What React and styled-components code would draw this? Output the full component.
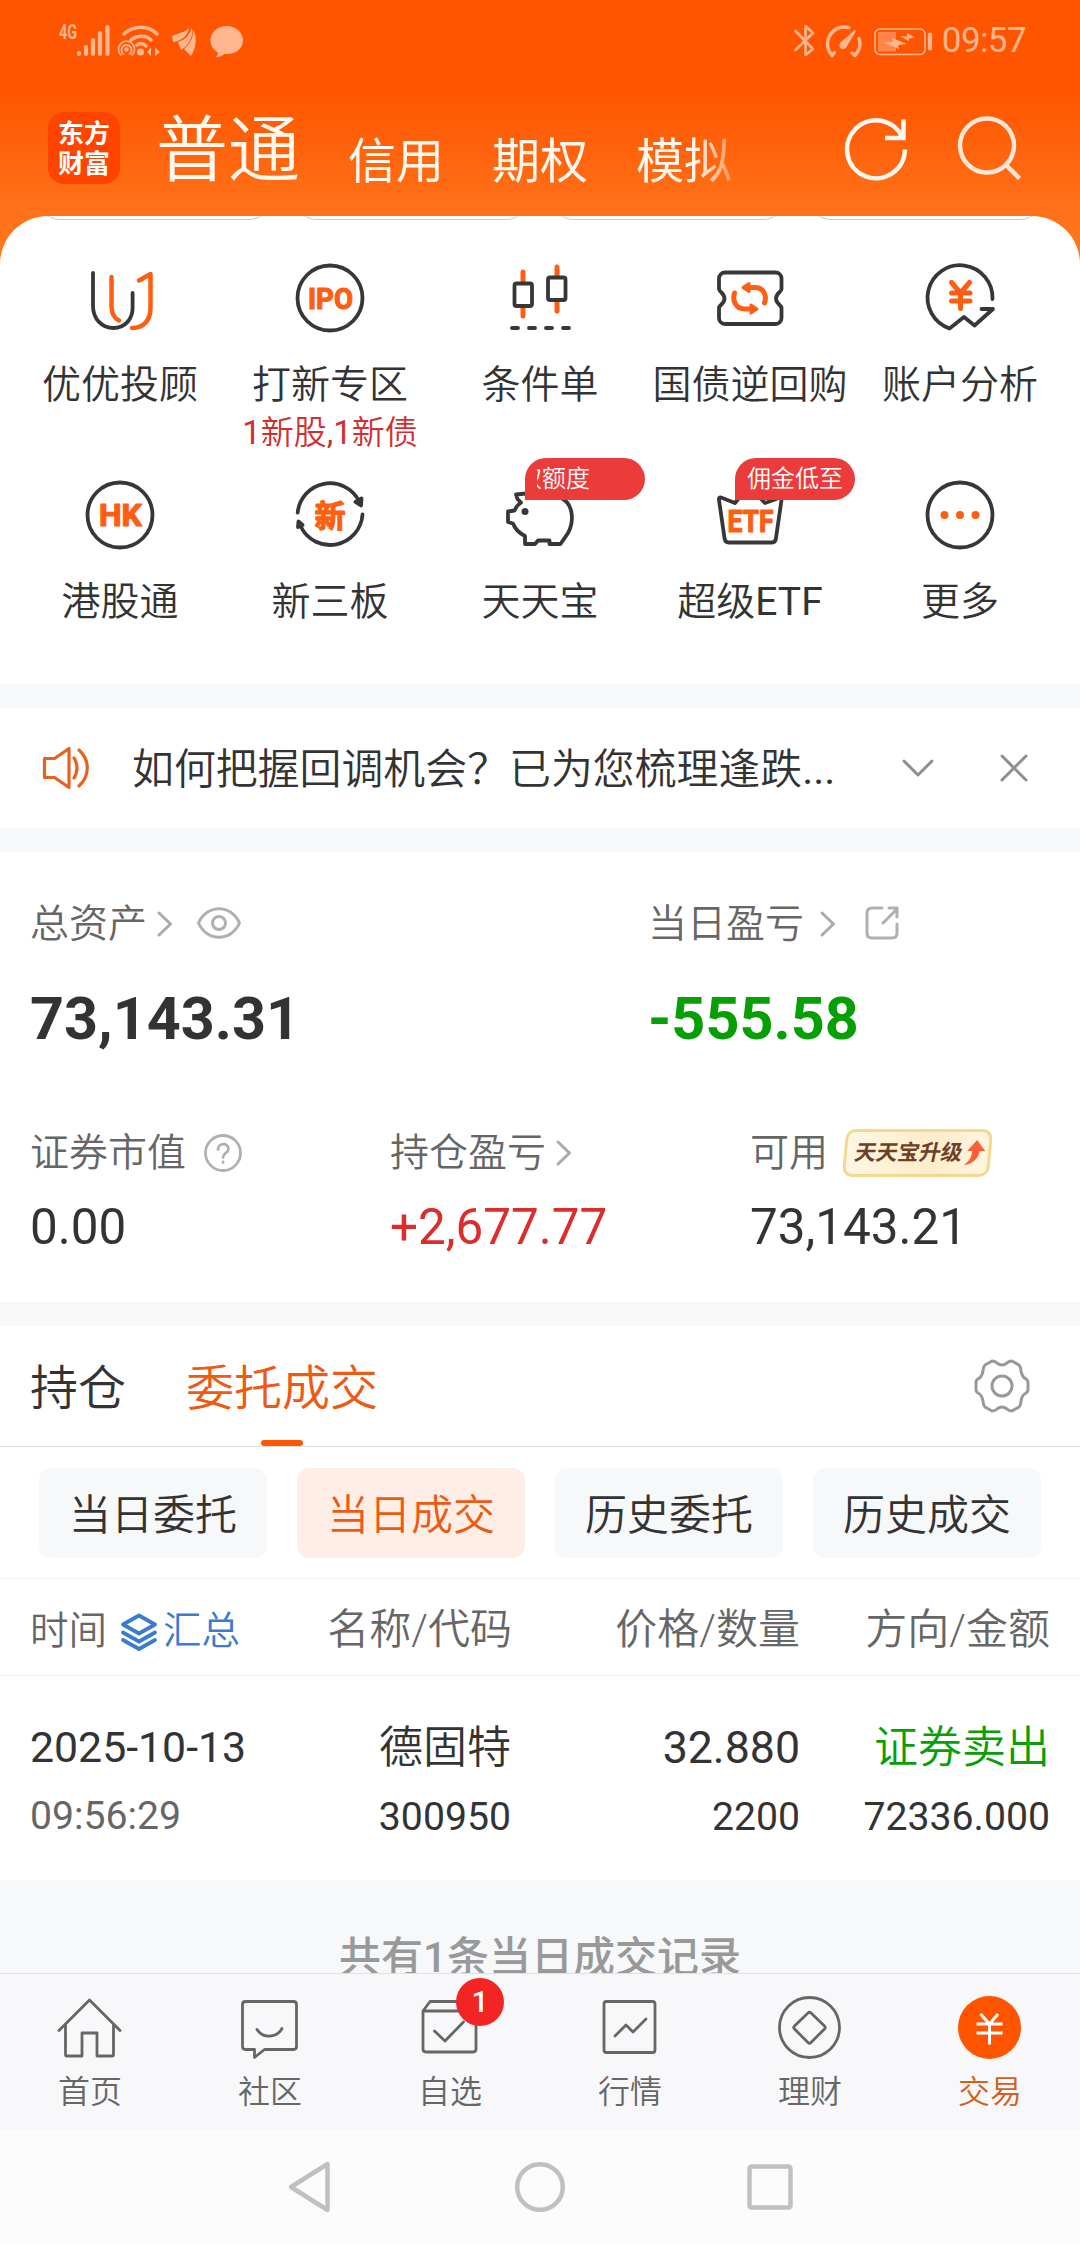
import React from "react";
import styled, { createGlobalStyle } from "styled-components";

const GlobalStyle = createGlobalStyle`
  * {
    box-sizing: border-box;
  }
  body {
    margin: 0;
    background: #fcfcfc;
    font-family: Roboto, "Noto Sans CJK SC", sans-serif;
    font-weight: 400;
    color: #333;
  }
  svg {
    display: block;
    flex: none;
    overflow: visible;
  }
`;

const Screen = styled.div`
  display: flex;
  flex-direction: column;
  width: 1080px;
  height: 2244px;
  overflow: hidden;
  background: #f7f8fa;
`;

const Top = styled.header`
  flex: none;
  height: 684px;
  background: linear-gradient(#ff5500 0, #ff5500 90px, #ff7018 205px, #ff7a20 270px);
`;

const StatusBar = styled.div`
  display: flex;
  align-items: center;
  justify-content: space-between;
  height: 82px;
  padding: 0 54px 0 58px;
  color: #ffb68f;
`;

const StatusGroup = styled.div`
  display: flex;
  align-items: center;
`;

const Clock = styled.span`
  margin-left: 8px;
  font-size: 35px;
  line-height: 40px;
  letter-spacing: -0.6px;
`;

const TitleBar = styled.div`
  display: flex;
  align-items: center;
  height: 134px;
  padding: 0 59px 0 48px;
  color: #fff8ee;
`;

const Logo = styled.div`
  display: flex;
  flex-direction: column;
  align-items: center;
  width: 72px;
  height: 72px;
  margin-top: -2px;
  padding-top: 5px;
  border-radius: 16px;
  background: #ff4400;
  color: #fff;
  font-family: "Noto Sans CJK SC", sans-serif;
  font-size: 26px;
  font-weight: 700;
  line-height: 30px;
`;

const TopTabs = styled.nav`
  display: flex;
  align-items: flex-start;
  width: 590px;
  height: 100px;
  margin-left: 36px;
  overflow: hidden;
  white-space: nowrap;
  mask-image: linear-gradient(90deg, #000 538px, rgba(0, 0, 0, 0.35) 575px);
`;

const TopTab = styled.span`
  margin-right: 48px;
  font-size: ${({ $big }) => ($big ? 72 : 48)}px;
  font-weight: ${({ $big }) => ($big ? 350 : 400)};
  line-height: ${({ $big }) => ($big ? 104 : 126)}px;
`;

const TopIcons = styled.div`
  display: flex;
  align-items: center;
  gap: 48px;
  margin-left: auto;
`;

const Panel = styled.section`
  height: 468px;
  border-radius: 48px 48px 0 0;
  background: #fff;
  overflow: hidden;
`;

const Pills = styled.div`
  display: flex;
  align-items: flex-end;
  gap: 20px;
  width: 1200px;
  height: 4px;
  padding-left: 36px;
`;

const Pill = styled.div`
  width: 237px;
  height: 60px;
  border: 1px solid #c8c8c8;
  border-radius: 24px;
`;

const Grid = styled.div`
  display: grid;
  grid-template-columns: repeat(5, 210px);
  grid-auto-rows: 217px;
  padding: 42px 15px 0;
`;

const Tool = styled.div`
  display: flex;
  flex-direction: column;
  align-items: center;
`;

const ToolIcon = styled.div`
  position: relative;
  width: 72px;
  height: 72px;
`;

const ToolName = styled.div`
  margin-top: 27px;
  font-size: 39px;
  font-weight: 350;
  line-height: 48px;
  white-space: nowrap;
`;

const ToolNote = styled.div`
  margin-top: 1px;
  color: #d03030;
  font-size: 33px;
  font-weight: 350;
  line-height: 46px;
  white-space: nowrap;
`;

const Latin = styled.span`
  font-weight: 400;
`;

const Badge = styled.div`
  position: absolute;
  left: 21px;
  top: -21px;
  width: 120px;
  height: 42px;
  padding: 0 12px;
  border-radius: 21px 21px 21px 0;
  background: #eb3b3b;
  color: #fff;
  font-size: 24px;
  font-weight: 350;
  line-height: 43px;
`;

const Marquee = styled.div`
  display: flex;
  overflow: hidden;
  white-space: nowrap;
`;

const MarqueeText = styled.span`
  margin-left: ${({ $shift }) => -$shift}px;
`;

const Notice = styled.section`
  display: flex;
  align-items: center;
  flex: none;
  height: 120px;
  margin: 24px 0;
  padding: 0 52px 0 42px;
  background: #fff;
`;

const NoticeText = styled.div`
  width: 720px;
  margin-left: 42px;
  padding-top: 3px;
  font-size: 41.9px;
  font-weight: 350;
  line-height: 60px;
  white-space: nowrap;
`;

const NoticeActions = styled.div`
  display: flex;
  align-items: center;
  gap: 66px;
  margin-left: auto;
`;

const Assets = styled.section`
  flex: none;
  height: 450px;
  padding: 47px 30px 0;
  background: #fff;
`;

const AssetRow = styled.div`
  display: grid;
  grid-template-columns: ${({ $columns }) => $columns};
  height: ${({ $height }) => $height}px;
`;

const AssetLabel = styled.div`
  display: flex;
  align-items: center;
  height: 50px;
  color: #666;
  font-size: 39px;
  font-weight: 350;
  line-height: 50px;
  svg {
    margin-left: ${({ $gap }) => $gap || 10}px;
  }
  svg + svg {
    margin: -2px 0 0 ${({ $iconGap }) => $iconGap || 24}px;
  }
`;

const BigValue = styled.div`
  margin-top: 34px;
  color: ${({ color }) => color || "#333"};
  font-size: 59.3px;
  font-weight: 700;
  line-height: 71px;
`;

const Value = styled.div`
  margin-top: 19px;
  color: ${({ color }) => color || "#333"};
  font-size: 49.4px;
  line-height: 60px;
`;

const Upgrade = styled.span`
  display: flex;
  align-items: center;
  width: 147px;
  height: 48px;
  margin-left: 16px;
  padding-left: 8px;
  border: 3px solid #f5d890;
  border-radius: 10px;
  background: linear-gradient(90deg, #fff6e4, #ffedcb 60%, #fff5e0);
  transform: skewX(-5deg);
  color: #6b4226;
  font-size: 21.5px;
  font-weight: 700;
  line-height: 40px;
  svg {
    margin-left: 2px;
  }
`;

const UpgradeText = styled.span`
  transform: skewX(-7deg);
`;

const Orders = styled.section`
  flex: none;
  height: 554px;
  margin-top: 24px;
  background: #fff;
`;

const Tabs = styled.div`
  display: flex;
  align-items: stretch;
  height: 121px;
  padding: 0 50px 0 30px;
  border-bottom: 1px solid #ddd;
  svg {
    margin: 33px 0 0 auto;
  }
`;

const Tab = styled.div`
  display: flex;
  flex-direction: column;
  align-items: center;
  justify-content: space-between;
  margin-right: 60px;
  color: ${({ $active }) => ($active ? "#ec5a14" : "#333")};
  font-size: 48px;
  font-weight: 350;
  line-height: 126px;
  &::after {
    content: "";
    width: 42px;
    height: 6px;
    margin-top: -12px;
    border-radius: 3px;
    background: ${({ $active }) => ($active ? "#ff5500" : "transparent")};
  }
`;

const Chips = styled.div`
  display: flex;
  gap: 30px;
  height: 132px;
  padding: 21px 39px;
  border-bottom: 1px solid #f4f4f5;
`;

const Chip = styled.div`
  width: 228px;
  height: 90px;
  border-radius: 12px;
  background: ${({ $active }) => ($active ? "#ffeee5" : "#f7f8fa")};
  color: ${({ $active }) => ($active ? "#ec5a14" : "#333")};
  font-size: 42px;
  font-weight: 350;
  line-height: 96px;
  text-align: center;
`;

const TableRow = styled.div`
  display: grid;
  grid-template-columns: 250px 231px 289px 250px;
  padding: 0 30px;
  text-align: right;
`;

const HeadRow = styled(TableRow)`
  grid-template-columns: 250px 232px 288px 250px;
  height: 97px;
  border-bottom: 1px solid #eee;
  color: #666;
  font-size: 42px;
  font-weight: 350;
  line-height: 102px;
`;

const TimeHead = styled.div`
  display: flex;
  align-items: center;
  font-size: 38.5px;
  line-height: 104px;
  svg {
    margin: 2px 5px 0 13px;
  }
`;

const Summary = styled.span`
  color: #3b7dcc;
`;

const Cell = styled.div`
  padding-top: 39px;
  color: ${({ color }) => color || "#333"};
  font-size: ${({ $light }) => ($light ? 44 : 44.7)}px;
  font-weight: ${({ $light }) => ($light ? 350 : 400)};
  line-height: 66px;
`;

const DateCell = styled(Cell)`
  padding-top: 38px;
  font-size: 42.8px;
  text-align: left;
`;

const SubText = styled.div`
  color: ${({ color }) => color || "#333"};
  font-size: 39.2px;
  font-weight: 400;
  line-height: 72px;
`;

const Footnote = styled.div`
  flex: none;
  height: 93px;
  overflow: hidden;
  padding-top: 48px;
  color: #999;
  font-size: 42px;
  font-weight: 500;
  line-height: 60px;
  text-align: center;
`;

const BottomBar = styled.nav`
  display: grid;
  grid-template-columns: repeat(6, 1fr);
  flex: none;
  height: 157px;
  border-top: 1px solid #e2e2e4;
  background: #f8f8fa;
`;

const BottomItem = styled.div`
  position: relative;
  display: flex;
  flex-direction: column;
  align-items: center;
  padding-top: 21px;
  color: ${({ $active }) => ($active ? "#d4601c" : "#666")};
  font-size: 32px;
  font-weight: 350;
  line-height: 42px;
`;

const BottomName = styled.span`
  margin-top: 12px;
`;

const Count = styled.span`
  position: absolute;
  top: 4px;
  left: 96px;
  width: 48px;
  height: 48px;
  border-radius: 50%;
  background: #f22424;
  color: #fff;
  font-size: 30px;
  font-weight: 500;
  line-height: 48px;
  text-align: center;
`;

const SystemNav = styled.div`
  display: flex;
  justify-content: center;
  align-items: center;
  gap: 182.5px;
  flex: none;
  height: 114px;
  background: #fcfcfc;
`;

const ORANGE = "#ff5e12";
const INK = "#373737";

const Line = ({ w = 72, h = 72, color = INK, sw = 3.8, children }) => (
  <svg
    width={w}
    height={h}
    viewBox={`0 0 ${w} ${h}`}
    fill="none"
    stroke={color}
    strokeWidth={sw}
    strokeLinecap="round"
    strokeLinejoin="round"
  >
    {children}
  </svg>
);

const IconText = ({ x, y, size, width, children }) => (
  <text
    x={x}
    y={y}
    fontSize={size}
    fontWeight="700"
    fill={ORANGE}
    stroke={ORANGE}
    strokeWidth="1.2"
    textLength={width}
    lengthAdjust="spacingAndGlyphs"
  >
    {children}
  </text>
);

// Latin letters and digits keep the regular weight next to the lighter Chinese text
const Mixed = ({ text }) =>
  text
    .split(/([\w,]+)/)
    .filter(Boolean)
    .map((part, i) => (/^[\w,]/.test(part) ? <Latin key={i}>{part}</Latin> : part));

const AdvisorIcon = () => (
  <Line>
    <path d="M9 11V44C9 57 18 66 29.500 66S48.600 57 48.600 46V31" />
    <path d="M27.500 15V44C27.500 52 30 56 35 58.500M48 66C60 66 66.500 58 66.500 46V12L55 18.500" stroke={ORANGE} strokeWidth="4.500" />
  </Line>
);

const IpoIcon = () => (
  <Line>
    <circle cx="36" cy="36" r="32.500" />
    <IconText x="14" y="47" size="30" width="45">IPO</IconText>
  </Line>
);

const CandleIcon = () => (
  <Line>
    <path d="M19 10V54M53 5V49" stroke={ORANGE} strokeWidth="5" />
    <rect x="10.500" y="21.500" width="17.500" height="22.500" rx="2" fill="#fff" />
    <rect x="44" y="15.500" width="17.500" height="22.500" rx="2" fill="#fff" />
    <path d="M8 66H14M25 66H31M42 66H48M59 66H65" />
  </Line>
);

const RepoIcon = () => (
  <Line>
    <path d="M11 10.500H61.500a6 6 0 0 1 6 6V27c0 3-5.500 4-5.500 9.500s5.500 6.500 5.500 9.500V56a6 6 0 0 1-6 6H11a6 6 0 0 1-6-6V46c0-3 5.500-4 5.500-9.500S5 30 5 27V16.500a6 6 0 0 1 6-6Z" />
    <g stroke={ORANGE} strokeWidth="5">
      <path d="M36 25.500H41C49 25.500 53.500 33 50.500 41M20.500 31C18 39 22 47 31 47H36" />
      <path d="M29 25.500L35 21.500V29.500ZM43 47L37 43V51Z" fill={ORANGE} strokeWidth="3" />
    </g>
  </Line>
);

const AccountIcon = () => (
  <Line>
    <path d="M68.500 37A32.500 32.500 0 1 0 25.500 66.500L40 55L50.500 63.500L69 47H57.500" />
    <path d="M27.500 20.500L36.500 31L45.500 20.500M36.500 31V46.500M27.500 31H46M27.500 39H46" stroke={ORANGE} strokeWidth="5" />
  </Line>
);

const HkIcon = () => (
  <Line>
    <circle cx="36" cy="36" r="32.500" />
    <IconText x="15" y="47" size="31" width="43">HK</IconText>
  </Line>
);

const NeeqIcon = () => (
  <Line>
    <path d="M3.700 33.500A32.500 32.500 0 0 1 65 22M68.500 35.500A32.500 32.500 0 0 1 7 48" />
    <path d="M61.500 23L67.500 19.500L67 26.500ZM4 48L8.500 46L4.500 42.500Z" fill={INK} />
    <IconText x="20.500" y="47.500" size="31">新</IconText>
  </Line>
);

const PigIcon = () => (
  <Line>
    <path d="M22 14.500L12 15.500L13.500 20L17 23.500C13.500 26 11.500 29 10.500 31.500L4 32.500V43L9 44.500C11 50 15 54 21 57V65H31L34 61.500H45.500V65H56.500L64 54C70 43 70 25 57 19C46 13 32 14 26 18Z" />
    <circle cx="21" cy="32.500" r="3.500" fill={INK} stroke="none" />
  </Line>
);

const EtfIcon = () => (
  <Line>
    <path d="M21 24L7 18.500Q4.500 18 5 21L10.500 59Q11 63.500 15 63.500H58Q61.500 63.500 62 59L67.500 21Q68 18 65 19L51 24L46 19M21 24L25 19" />
    <IconText x="13.500" y="53" size="31" width="46">ETF</IconText>
  </Line>
);

const MoreIcon = () => (
  <Line>
    <circle cx="36" cy="36" r="32.500" />
    <g fill={ORANGE} stroke="none">
      <circle cx="20.500" cy="36" r="4" />
      <circle cx="36" cy="36" r="4" />
      <circle cx="51.500" cy="36" r="4" />
    </g>
  </Line>
);

const Chevron = () => (
  <Line w={16} h={26} color="#aaa" sw={3}>
    <path d="M2 2L13.500 13L2 24" />
  </Line>
);

const tools = [
  { name: "优优投顾", Icon: AdvisorIcon },
  { name: "打新专区", Icon: IpoIcon, note: "1新股,1新债" },
  { name: "条件单", Icon: CandleIcon },
  { name: "国债逆回购", Icon: RepoIcon },
  { name: "账户分析", Icon: AccountIcon },
  { name: "港股通", Icon: HkIcon },
  { name: "新三板", Icon: NeeqIcon },
  { name: "天天宝", Icon: PigIcon, badge: "取额度", shift: 19 },
  { name: "超级ETF", Icon: EtfIcon, badge: "佣金低至", shift: 0 },
  { name: "更多", Icon: MoreIcon },
];

const HomeIcon = () => (
  <Line w={64} h={64} color="#666" sw={2.8}>
    <path d="M1 35.500L31.500 5L62 35.500M7.500 30V60Q7.500 61 8.500 61H24V38H39V61H54.500Q55.500 61 55.500 60V30" />
  </Line>
);

const CommunityIcon = () => (
  <Line w={64} h={64} color="#666" sw={2.8}>
    <path d="M7.500 6.500H55.500Q58.500 6.500 58.500 9.500V51.500Q58.500 54.500 55.500 54.500H26.500L16.500 62.500V54.500H7.500Q4.500 54.500 4.500 51.500V9.500Q4.500 6.500 7.500 6.500Z" />
    <path d="M19 34.500C24.500 43.500 38.500 43.500 44 33.500" />
  </Line>
);

const WatchIcon = () => (
  <Line w={64} h={64} color="#666" sw={2.8}>
    <path d="M5 16L12 6.500H52L58 16M5 16H58V54Q58 57 55 57H8Q5 57 5 54ZM16.500 36L27 46L45.500 27" />
  </Line>
);

const MarketIcon = () => (
  <Line w={64} h={64} color="#666" sw={2.8}>
    <rect x="6" y="6.500" width="51" height="51" rx="2.500" />
    <path d="M17 41L28 30L35 37L48 24" />
  </Line>
);

const WealthIcon = () => (
  <Line w={64} h={64} color="#666" sw={2.8}>
    <circle cx="31.500" cy="32.500" r="30" />
    <path d="M30 18Q31.500 16.500 33 18L46.500 31Q48 32.500 46.500 34L33 47.500Q31.500 49 30 47.500L16.500 34Q15 32.500 16.500 31Z" />
  </Line>
);

const TradeIcon = () => (
  <Line w={64} h={64} color="#fff" sw={3}>
    <circle cx="31.500" cy="32.500" r="31.500" fill="#ff5500" stroke="none" />
    <path d="M22.500 19L31.500 29L40 19M31.500 29V49.500M18.500 29H44.500M18.500 38H44.500" strokeLinecap="butt" />
  </Line>
);

const bottomItems = [
  { name: "首页", Icon: HomeIcon },
  { name: "社区", Icon: CommunityIcon },
  { name: "自选", Icon: WatchIcon, count: 1 },
  { name: "行情", Icon: MarketIcon },
  { name: "理财", Icon: WealthIcon },
  { name: "交易", Icon: TradeIcon, active: true },
];

const StatusLeft = () => (
  <svg width="186" height="36" viewBox="58 23 186 36" fill="none" stroke="currentColor" strokeLinecap="round">
    <text x="59" y="39" fontSize="20" fontWeight="700" fill="currentColor" stroke="none" textLength="18" lengthAdjust="spacingAndGlyphs">4G</text>
    <path d="M79 53V54M86 47V54M93 40V54M100 33V54M107.500 27V54" strokeWidth="4.200" />
    <path d="M124 34C134 25 148 25 157 34M131 40C137 35 146 35 151 40M137 45C139 43 143 43 146 46" strokeWidth="3.500" />
    <circle cx="140.500" cy="52" r="3.500" fill="currentColor" stroke="none" />
    <circle cx="126.500" cy="49.500" r="2.200" fill="currentColor" stroke="none" />
    <path d="M123.500 54A5 5 0 1 1 129.500 54M121 55A8 8 0 1 1 132 55" strokeWidth="1.800" />
    <path d="M147 52L151 47.500V56ZM160 52L155 47.500V56Z" fill="currentColor" stroke="none" />
    <g fill="currentColor" stroke="none">
      <path d="M172 36C178 33 184 33 189 28C188 36 181 41 173 42Z" />
      <path d="M178 42C185 40 190 35 191.500 28C194 37 188 46 181 50Z" />
      <path d="M184 49C191 44 194 36 192.500 29C198 36 196 49 191 56Z" />
      <path d="M226.500 26C217 26 210.500 32.500 210.500 40.500C210.500 46.500 213.500 50 218 52.500C218 54.500 217 56 215.500 57.500C219.500 57 222 56 224.500 54C235 55 243 49 243 40.500C243 32.500 236 26 226.500 26Z" />
    </g>
  </svg>
);

const StatusRight = () => (
  <svg width="140" height="36" viewBox="794 23 140 36" fill="none" stroke="currentColor" strokeLinecap="round" strokeLinejoin="round">
    <path d="M795.500 31L813 49L805.500 55V26L813 33L795.500 50" strokeWidth="2.600" />
    <path d="M849 27.600A17 17 0 0 0 832 55.500L834.500 52.500M859 38.500C861.500 45 859 51 855 55.500L852 53" strokeWidth="3.400" />
    <path d="M841.500 43L855 31L845.500 46.500Z" fill="currentColor" strokeWidth="2" />
    <circle cx="843" cy="45.500" r="3.500" fill="currentColor" stroke="none" />
    <rect x="875" y="29" width="50" height="25.500" rx="5" strokeWidth="1.600" />
    <rect x="878" y="32" width="18" height="19.500" fill="#ff8648" stroke="none" />
    <path d="M884 42.500L893 42L892 38L907 44L898 45L899 49ZM900 36L907 36.500V33L915 37.500L909 38.500L908.500 41Z" fill="currentColor" stroke="none" />
    <path d="M930 34.500V48.500" strokeWidth="4.200" />
  </svg>
);

function App() {
  return (
    <Screen>
      <GlobalStyle />
      <Top>
        <StatusBar>
          <StatusLeft />
          <StatusGroup>
            <StatusRight />
            <Clock>09:57</Clock>
          </StatusGroup>
        </StatusBar>
        <TitleBar>
          <Logo>
            <span>东方</span>
            <span>财富</span>
          </Logo>
          <TopTabs>
            <TopTab $big>普通</TopTab>
            <TopTab>信用</TopTab>
            <TopTab>期权</TopTab>
            <TopTab>模拟</TopTab>
          </TopTabs>
          <TopIcons>
            <svg width="64" height="64" viewBox="0 0 64 64" fill="none" stroke="currentColor" strokeWidth="4.500">
              <path d="M60 32.500A29 29 0 1 1 57.500 20.500M58.500 2.500V21H40" />
            </svg>
            <svg width="64" height="66" viewBox="0 0 64 66" fill="none" stroke="#ffe6d4" strokeWidth="4.500">
              <circle cx="30" cy="29.500" r="27" />
              <path d="M49 49L62.500 62.500" />
            </svg>
          </TopIcons>
        </TitleBar>
        <Panel>
          <Pills>
            {[0, 1, 2, 3].map((n) => (
              <Pill key={n} />
            ))}
          </Pills>
          <Grid>
            {tools.map(({ name, Icon, note, badge, shift }) => (
              <Tool key={name}>
                <ToolIcon>
                  <Icon />
                  {badge && (
                    <Badge>
                      <Marquee>
                        <MarqueeText $shift={shift}>{badge}</MarqueeText>
                      </Marquee>
                    </Badge>
                  )}
                </ToolIcon>
                <ToolName>
                  <Mixed text={name} />
                </ToolName>
                {note && (
                  <ToolNote>
                    <Mixed text={note} />
                  </ToolNote>
                )}
              </Tool>
            ))}
          </Grid>
        </Panel>
      </Top>

      <Notice>
        <Line w={48} h={44} color="#e8621f" sw={3.2}>
          <path d="M2.500 12.500H12.500L27 2.500V41.500L12.500 31.500H2.500ZM32 12C36 18 36 26 32 32M37 4C48 14 48 30 37 40" />
        </Line>
        <NoticeText>
          如何把握回调机会？已为您梳理逢跌<Latin>...</Latin>
        </NoticeText>
        <NoticeActions>
          <Line w={32} h={18} color="#8f8f8f" sw={3}>
            <path d="M2 2L16 16L30 2" />
          </Line>
          <Line w={28} h={26} color="#8f8f8f" sw={3}>
            <path d="M2 1L26 25M26 1L2 25" />
          </Line>
        </NoticeActions>
      </Notice>

      <Assets>
        <AssetRow $columns="618px 1fr" $height={229}>
          <div>
            <AssetLabel>
              总资产
              <Chevron />
              <Line w={44} h={32} color="#b0b0b0" sw={3}>
                <path d="M1.500 16C10 -3 34 -3 42.500 16C34 35 10 35 1.500 16Z" />
                <circle cx="22" cy="16" r="6.500" />
              </Line>
            </AssetLabel>
            <BigValue>73,143.31</BigValue>
          </div>
          <div>
            <AssetLabel $gap={16} $iconGap={29}>
              当日盈亏
              <Chevron />
              <Line w={34} h={34} color="#b0b0b0" sw={3}>
                <path d="M17 2H7Q2 2 2 7V27Q2 32 7 32H27Q32 32 32 27V18M18 17L32 3M24 2H32V11" />
              </Line>
            </AssetLabel>
            <BigValue color="#069f06">-555.58</BigValue>
          </div>
        </AssetRow>
        <AssetRow $columns="360px 360px 1fr" $height={170}>
          <div>
            <AssetLabel $gap={18}>
              证券市值
              <Line w={38} h={38} color="#b0b0b0" sw={2.8}>
                <circle cx="19" cy="19" r="17.500" />
                <path d="M14 15.500C14 8.500 24.500 8.500 24.500 15C24.500 19 19 19 19 23.500M19 28V28.500" />
              </Line>
            </AssetLabel>
            <Value>0.00</Value>
          </div>
          <div>
            <AssetLabel>
              持仓盈亏
              <Chevron />
            </AssetLabel>
            <Value color="#dc2c2c">+2,677.77</Value>
          </div>
          <div>
            <AssetLabel>
              可用
              <Upgrade>
                <UpgradeText>天天宝升级</UpgradeText>
                <svg width="20" height="26" viewBox="0 0 20 26">
                  <path d="M11 0L20 11H14.500C14 18 9 24 0 25C5 21 7 17 7 11H2Z" fill="#fb6038" />
                </svg>
              </Upgrade>
            </AssetLabel>
            <Value>73,143.21</Value>
          </div>
        </AssetRow>
      </Assets>

      <Orders>
        <Tabs>
          <Tab>持仓</Tab>
          <Tab $active>委托成交</Tab>
          <Line w={56} h={54} color="#999" sw={3}>
            <path d="M18 2Q21 2 23 4Q28 8 33 4Q35 2 38 2L45 6Q47 8 47 12Q48 18 52 20Q54 21 54 24V30Q54 33 52 34Q48 36 47 42Q47 46 45 48L38 52Q35 52 33 50Q28 46 23 50Q21 52 18 52L11 48Q9 46 9 42Q8 36 4 34Q2 33 2 30V24Q2 21 4 20Q8 18 9 12Q9 8 11 6Z" />
            <circle cx="28" cy="27" r="10" />
          </Line>
        </Tabs>
        <Chips>
          <Chip>当日委托</Chip>
          <Chip $active>当日成交</Chip>
          <Chip>历史委托</Chip>
          <Chip>历史成交</Chip>
        </Chips>
        <HeadRow>
          <TimeHead>
            时间
            <Line w={38} h={38} color="#3b7dcc" sw={3.8}>
              <path d="M19 2.500L35 11.500L19 20.500L3 11.500ZM3 19.500L19 28.500L35 19.500M3 27L19 36L35 27" />
            </Line>
            <Summary>汇总</Summary>
          </TimeHead>
          <div>名称/代码</div>
          <div>价格/数量</div>
          <div>方向/金额</div>
        </HeadRow>
        <TableRow>
          <DateCell>
            2025-10-13
            <SubText color="#666">09:56:29</SubText>
          </DateCell>
          <Cell $light>
            德固特
            <SubText>300950</SubText>
          </Cell>
          <Cell>
            32.880
            <SubText>2200</SubText>
          </Cell>
          <Cell $light color="#069f06">
            证券卖出
            <SubText>72336.000</SubText>
          </Cell>
        </TableRow>
      </Orders>

      <Footnote>共有1条当日成交记录</Footnote>

      <BottomBar>
        {bottomItems.map(({ name, Icon, count, active }) => (
          <BottomItem key={name} $active={active}>
            <Icon />
            {count && <Count>{count}</Count>}
            <BottomName>{name}</BottomName>
          </BottomItem>
        ))}
      </BottomBar>

      <SystemNav>
        <Line w={44} h={52} color="#c0c0c0" sw={4.5}>
          <path d="M40.500 3V49L4 26Z" />
        </Line>
        <Line w={52} h={50} color="#c0c0c0" sw={4.5}>
          <circle cx="27" cy="25" r="22.800" />
        </Line>
        <Line w={46} h={46} color="#c0c0c0" sw={4.5}>
          <rect x="1.500" y="2.500" width="41" height="41" rx="2" />
        </Line>
      </SystemNav>
    </Screen>
  );
}

export default App;
